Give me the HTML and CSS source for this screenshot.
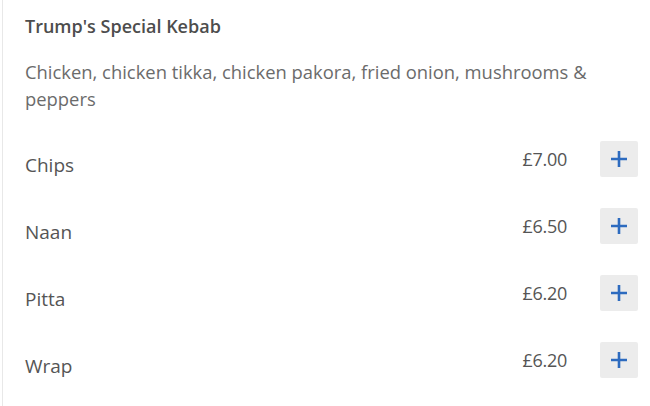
FILE: index.html
```html
<!DOCTYPE html>
<html lang="en">
<head>
    <meta charset="UTF-8">
    <meta name="viewport" content="width=device-width, initial-scale=1.0">
    <title>Trump's Special Kebab</title>
<link rel="stylesheet" href="styles.css">
</head>
<body>

<div class="menu-item">
    <h2 class="item-title">Trump's Special Kebab</h2>
    <p class="item-desc">Chicken, chicken tikka, chicken pakora, fried onion, mushrooms &amp; peppers</p>

    <!-- Options -->
    <div class="option">
        <span class="option-name">Chips</span>
        <span class="option-price">£7.00</span>
        <button class="add-btn" aria-label="Add Chips"><svg viewBox="0 0 20 20" width="20" height="20"><path d="M10 2v16M2 10h16" stroke="#2d6bbf" stroke-width="2.6" fill="none"/></svg></button>
    </div>
    <div class="option">
        <span class="option-name">Naan</span>
        <span class="option-price">£6.50</span>
        <button class="add-btn" aria-label="Add Naan"><svg viewBox="0 0 20 20" width="20" height="20"><path d="M10 2v16M2 10h16" stroke="#2d6bbf" stroke-width="2.6" fill="none"/></svg></button>
    </div>
    <div class="option">
        <span class="option-name">Pitta</span>
        <span class="option-price">£6.20</span>
        <button class="add-btn" aria-label="Add Pitta"><svg viewBox="0 0 20 20" width="20" height="20"><path d="M10 2v16M2 10h16" stroke="#2d6bbf" stroke-width="2.6" fill="none"/></svg></button>
    </div>
    <div class="option">
        <span class="option-name">Wrap</span>
        <span class="option-price">£6.20</span>
        <button class="add-btn" aria-label="Add Wrap"><svg viewBox="0 0 20 20" width="20" height="20"><path d="M10 2v16M2 10h16" stroke="#2d6bbf" stroke-width="2.6" fill="none"/></svg></button>
    </div>
</div>

</body>
</html>
```

FILE: styles.css
```css
body {
    font-family: 'Open Sans', 'Noto Sans', sans-serif;
    margin: 0;
    padding: 0;
    background: #ffffff;
    color: #4a4a4a;
}
.menu-item {
    margin-left: 2px;
    border-left: 1px solid #e8e8e8;
    padding: 12px 12px 20px 22px;
    min-height: 380px;
}
.item-title {
    font-size: 18px;
    font-weight: 600;
    margin: 0;
    line-height: 28px;
    color: #4d4d4d;
}
.item-desc {
    font-size: 18.4px;
    line-height: 27px;
    margin: 18px 0 13px;
    color: #6b6b6b;
}
.option {
    display: flex;
    align-items: center;
    height: 67px;
}
.option-name {
    flex: 1;
    font-size: 19px;
    padding-top: 12px;
    color: #555;
}
.option-price {
    font-size: 18px;
    letter-spacing: -0.3px;
    color: #555;
    margin-right: 33px;
}
.add-btn {
    width: 38px;
    height: 36px;
    border: none;
    border-radius: 2px;
    background: #ececec;
    display: flex;
    align-items: center;
    justify-content: center;
    padding: 0;
    cursor: pointer;
}
```
